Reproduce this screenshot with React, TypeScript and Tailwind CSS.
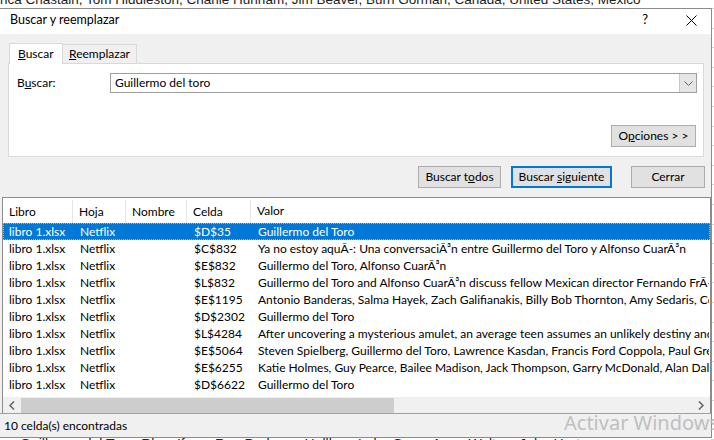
import React from "react";

const rows: [string, string][] = [
  ["$D$35", "Guillermo del Toro"],
  ["$C$832", "Ya no estoy aquÃ-: Una conversaciÃ³n entre Guillermo del Toro y Alfonso CuarÃ³n"],
  ["$E$832", "Guillermo del Toro, Alfonso CuarÃ³n"],
  ["$L$832", "Guillermo del Toro and Alfonso CuarÃ³n discuss fellow Mexican director Fernando FrÃ-as de la Parra"],
  ["$E$1195", "Antonio Banderas, Salma Hayek, Zach Galifianakis, Billy Bob Thornton, Amy Sedaris, Constance Zimmer"],
  ["$D$2302", "Guillermo del Toro"],
  ["$L$4284", "After uncovering a mysterious amulet, an average teen assumes an unlikely destiny and sets out"],
  ["$E$5064", "Steven Spielberg, Guillermo del Toro, Lawrence Kasdan, Francis Ford Coppola, Paul Greengrass"],
  ["$E$6255", "Katie Holmes, Guy Pearce, Bailee Madison, Jack Thompson, Garry McDonald, Alan Dale, Julia Blake"],
  ["$D$6622", "Guillermo del Toro"],
];

function Btn({ children, w, focus }: { children: React.ReactNode; w: string; focus?: boolean }) {
  return (
    <div
      className={
        "h-[22px] flex items-center justify-center bg-[#e1e1e1] text-[12px] text-black " +
        w +
        (focus ? " border-2 border-[#0078d7]" : " border border-[#adadad]")
      }
    >
      {children}
    </div>
  );
}

export default function App() {
  return (
    <div
      className="relative w-[714px] h-[440px] overflow-hidden bg-white"
      style={{ fontFamily: 'Lato, "Noto Sans", sans-serif' }}
    >
      {/* Excel sheet behind */}
      <div className="h-[9px] overflow-hidden border-b border-[#d4d4d4]">
        <div
          className="whitespace-nowrap text-[13.5px] leading-[14px] text-[#222] mt-[-7px] pl-0"
          style={{ fontFamily: '"Liberation Sans", sans-serif' }}
        >
          rica Chastain, Tom Hiddleston, Charlie Hunnam, Jim Beaver, Burn Gorman, Canada, United States, Mexico
        </div>
      </div>
      <div className="absolute right-0 top-[9px] w-[3px] h-[431px] flex flex-col">
        {Array.from({ length: 22 }).map((_, i) => (
          <div key={i} className="h-[20px] border-b border-[#d4d4d4] bg-white" />
        ))}
      </div>
      <div className="absolute left-0 bottom-0 w-[714px] h-[3px] overflow-hidden">
        <div
          className="whitespace-nowrap text-[14px] leading-[14px] text-[#222] pl-[20px]"
          style={{ fontFamily: '"Liberation Sans", sans-serif' }}
        >
          Guillermo del Toro, Rhys Ifans, Ron Perlman, Hellboy, Luke Goss, Anna Walton, John Hurt
        </div>
      </div>

      {/* Dialog window */}
      <div className="absolute left-[-1px] top-[8px] w-[713px] h-[430px] border border-[#8c8c8c] bg-[#f0f0f0] flex flex-col text-black text-[12px]">
        {/* title bar */}
        <div className="h-[25px] bg-white flex items-center pl-[10px] pb-[3px] shrink-0">
          <span className="text-[12.5px]">Buscar y reemplazar</span>
          <div className="flex-1" />
          <span className="text-[13px] mr-[38px]">?</span>
          <svg width="11" height="11" viewBox="0 0 11 11" className="mr-[14px]">
            <path d="M0.5 0.5 L10.5 10.5 M10.5 0.5 L0.5 10.5" stroke="#000" strokeWidth="1" />
          </svg>
        </div>

        {/* tabs */}
        <div className="flex items-end h-[21px] mt-[8px] pl-[9px] shrink-0">
          <div className="h-[21px] w-[54px] bg-white border border-b-0 border-[#d9d9d9] flex items-center pl-[8px] pb-[1px] relative z-10 mb-[-1px]">
            <span>
              <span className="underline">B</span>uscar
            </span>
          </div>
          <div className="h-[19px] w-[74px] bg-[#f0f0f0] border border-l-0 border-b-0 border-[#d9d9d9] flex items-center pl-[6px]">
            <span>
              <span className="underline">R</span>eemplazar
            </span>
          </div>
        </div>

        {/* tab panel */}
        <div className="mx-[8px] mr-[7px] h-[94px] bg-white border border-[#d9d9d9] flex flex-col shrink-0">
          <div className="flex items-center mt-[9px] h-[20px]">
            <span className="pl-[8px] w-[101px]">
              B<span className="underline">u</span>scar:
            </span>
            <div className="flex-1 mr-[6px] h-[20px] border border-[#a0a0a0] flex items-center">
              <span className="pl-[4px] flex-1">Guillermo del toro</span>
              <div className="w-[17px] h-[18px] bg-[#e5e5e5] border-l border-[#c8c8c8] flex items-center justify-center">
                <svg width="9" height="5" viewBox="0 0 9 5">
                  <path d="M0.5 0.5 L4.5 4.5 L8.5 0.5" stroke="#606060" strokeWidth="1" fill="none" />
                </svg>
              </div>
            </div>
          </div>
          <div className="flex-1" />
          <div className="flex justify-end mb-[9px] mr-[7px]">
            <Btn w="w-[85px]">
              <span>
                O<span className="underline">p</span>ciones &gt; &gt;
              </span>
            </Btn>
          </div>
        </div>

        {/* buttons row */}
        <div className="flex justify-end mt-[9px] mr-[6px] h-[22px] shrink-0">
          <Btn w="w-[83px]">
            <span>
              Buscar t<span className="underline">o</span>dos
            </span>
          </Btn>
          <div className="w-[10px]" />
          <Btn w="w-[101px]" focus>
            <span>
              Buscar <span className="underline">s</span>iguiente
            </span>
          </Btn>
          <div className="w-[19px]" />
          <Btn w="w-[74px]">Cerrar</Btn>
        </div>

        {/* results list */}
        <div className="mt-[9px] ml-[2px] mr-[0px] flex-1 bg-white border-t border-l border-r border-[#8c8c8c] flex flex-col overflow-hidden">
          <div className="h-[25px] flex items-center shrink-0">
            {[
              ["Libro", "w-[70px]"],
              ["Hoja", "w-[53px]"],
              ["Nombre", "w-[61px]"],
              ["Celda", "w-[64px]"],
            ].map(([t, w]) => (
              <div key={t} className={"h-[23px] mt-[2px] flex items-center pl-[6px] border-r border-[#e5e5e5] " + w}>
                {t}
              </div>
            ))}
            <div className="pl-[6px]">Valor</div>
          </div>
          {rows.map(([cell, val], i) => (
            <div
              key={i}
              className={
                "h-[17px] flex items-center whitespace-nowrap overflow-hidden shrink-0 " +
                (i === 0 ? "bg-[#0078d7] text-white border border-dotted border-[#f0a060]" : "border border-transparent")
              }
            >
              <div className="w-[70px] pl-[5px] shrink-0">libro 1.xlsx</div>
              <div className="w-[53px] pl-[6px] shrink-0">Netflix</div>
              <div className="w-[61px] shrink-0" />
              <div className="w-[64px] pl-[6px] shrink-0">{cell}</div>
              <div className="pl-[6px] shrink-0">{val}</div>
            </div>
          ))}
          <div className="flex-1" />
          {/* horizontal scrollbar */}
          <div className="h-[16px] bg-[#f0f0f0] flex items-center shrink-0">
            <div className="w-[18px] flex items-center justify-center">
              <svg width="6" height="9" viewBox="0 0 6 9">
                <path d="M5 0.5 L1 4.5 L5 8.5" stroke="#606060" strokeWidth="1.5" fill="none" />
              </svg>
            </div>
            <div className="w-[373px] h-[15px] bg-[#cdcdcd]" />
            <div className="flex-1" />
            <div className="w-[18px] flex items-center justify-center">
              <svg width="6" height="9" viewBox="0 0 6 9">
                <path d="M1 0.5 L5 4.5 L1 8.5" stroke="#606060" strokeWidth="1.5" fill="none" />
              </svg>
            </div>
          </div>
        </div>

        {/* status bar */}
        <div className="h-[24px] border-t border-[#a0a0a0] flex items-center pl-[4px] shrink-0">
          10 celda(s) encontradas
        </div>
      </div>

      {/* Activation watermark */}
      <div
        className="absolute left-[564px] top-[408px] text-[20px] text-[#b4b4b4] whitespace-nowrap opacity-80"
        style={{ fontFamily: '"Noto Sans", sans-serif' }}
      >
        Activar Windows
      </div>
    </div>
  );
}
